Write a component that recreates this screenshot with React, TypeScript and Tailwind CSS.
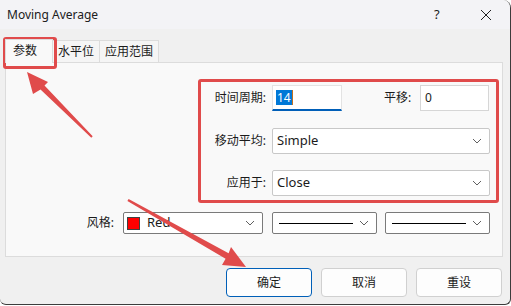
import React from "react";

const font = { fontFamily: '"Noto Sans", "Noto Sans CJK SC", sans-serif' };

function Chevron() {
  return (
    <svg width="10" height="6" viewBox="0 0 10 6" className="shrink-0">
      <path d="M1 1 L5 5 L9 1" fill="none" stroke="#606060" strokeWidth="1" />
    </svg>
  );
}

export default function App() {
  return (
    <div className="w-[511px] h-[306px] bg-white relative overflow-hidden" style={font}>
      <div className="w-[511px] h-[305px] bg-[#f0f0f0] border-r border-b border-[#3c3c3c] rounded-tr-[8px] rounded-b-[6px] flex flex-col text-[12px] text-[#1b1b1b] overflow-hidden">
        {/* title bar */}
        <div className="h-[29px] bg-[#f3f3f6] flex items-center pl-[7px] shrink-0">
          <span className="text-[12px] text-[#202020] leading-none">Moving Average</span>
          <span className="ml-auto w-[10px] text-[13px] leading-none mr-[36px]">?</span>
          <svg width="12" height="12" viewBox="0 0 12 12" className="mr-[18px]">
            <path d="M1 1 L11 11 M11 1 L1 11" stroke="#202020" strokeWidth="1" />
          </svg>
        </div>

        {/* tabs */}
        <div className="flex items-end pl-[5px] mt-[9px] h-[24px] shrink-0">
          <div className="w-[48px] h-[24px] bg-[#f9f9f9] border border-b-0 border-[#dcdcdc] flex items-start pt-[2px] pl-[7px] relative z-10 -mb-px">
            参数
          </div>
          <div className="w-[47px] h-[22px] bg-[#f5f5f5] border border-l-0 border-b-0 border-[#dcdcdc] flex items-center justify-center">
            水平位
          </div>
          <div className="w-[59px] h-[22px] bg-[#f5f5f5] border border-l-0 border-b-0 border-[#dcdcdc] flex items-center justify-center">
            应用范围
          </div>
        </div>

        {/* panel */}
        <div className="ml-[5px] w-[498px] h-[195px] bg-[#f9f9f9] border border-[#dcdcdc] shrink-0 flex flex-col pt-[22px]">
          {/* row 1 */}
          <div className="flex items-center h-[26px] pl-[200px]">
            <div className="w-[60px] text-right whitespace-nowrap">时间周期:</div>
            <div className="ml-[6px] w-[70px] h-[26px] bg-white border border-[#e3e3e3] border-b-2 border-b-[#005fb8] flex items-center pl-[3px]">
              <span className="bg-[#0078d7] text-white px-px leading-[15px]">14</span>
              <span className="w-px h-[15px] bg-[#c07020]" />
            </div>
            <div className="ml-[42px] w-[30px] whitespace-nowrap shrink-0">平移:</div>
            <div className="ml-[6px] w-[69px] h-[26px] bg-white border border-[#d6d6d6] flex items-center pl-[4px]">0</div>
          </div>
          {/* row 2 */}
          <div className="flex items-center h-[26px] pl-[200px] mt-[17px]">
            <div className="w-[60px] text-right whitespace-nowrap">移动平均:</div>
            <div className="ml-[6px] w-[218px] h-[26px] bg-white border border-[#c8c8c8] rounded-[2px] flex items-center pl-[4px] pr-[7px]">
              <span className="text-[13px]">Simple</span>
              <span className="ml-auto"><Chevron /></span>
            </div>
          </div>
          {/* row 3 */}
          <div className="flex items-center h-[26px] pl-[200px] mt-[16px]">
            <div className="w-[60px] text-right whitespace-nowrap">应用于:</div>
            <div className="ml-[6px] w-[218px] h-[26px] bg-white border border-[#c8c8c8] rounded-[2px] flex items-center pl-[4px] pr-[7px]">
              <span className="text-[13px]">Close</span>
              <span className="ml-auto"><Chevron /></span>
            </div>
          </div>
          {/* row 4 */}
          <div className="flex items-center h-[22px] mt-[16px]">
            <div className="w-[108px] text-right whitespace-nowrap">风格:</div>
            <div className="ml-[9px] w-[140px] h-[22px] bg-white border border-[#7a7a7a] rounded-[2px] flex items-center pl-[3px] pr-[7px]">
              <span className="w-[13px] h-[13px] bg-[#ff0000] border border-[#404040]" />
              <span className="ml-[7px] text-[13px]">Red</span>
              <span className="ml-auto"><Chevron /></span>
            </div>
            <div className="ml-[9px] w-[105px] h-[22px] bg-white border border-[#7a7a7a] rounded-[2px] flex items-center pl-[6px] pr-[7px]">
              <span className="w-[74px] h-px bg-black" />
              <span className="ml-auto"><Chevron /></span>
            </div>
            <div className="ml-[8px] w-[105px] h-[22px] bg-white border border-[#7a7a7a] rounded-[2px] flex items-center pl-[6px] pr-[7px]">
              <span className="w-[74px] h-px bg-black" />
              <span className="ml-auto"><Chevron /></span>
            </div>
          </div>
        </div>

        {/* buttons */}
        <div className="flex justify-end gap-[9px] pr-[8px] mt-[11px]">
          <button className="w-[86px] h-[29px] bg-[#fdfdfd] border border-[#005fb8] rounded-[4px] text-[12px]" style={font}>确定</button>
          <button className="w-[86px] h-[29px] bg-[#fdfdfd] border border-[#d0d0d0] rounded-[4px] text-[12px]" style={font}>取消</button>
          <button className="w-[86px] h-[29px] bg-[#fdfdfd] border border-[#d0d0d0] rounded-[4px] text-[12px]" style={font}>重设</button>
        </div>
      </div>

      {/* annotations */}
      <div className="absolute left-[3px] top-[37px] w-[54px] h-[32px] border-[3px] border-[#e04b4b] rounded-[3px] pointer-events-none" />
      <div className="absolute left-[198px] top-[79px] w-[301px] h-[124px] border-[3px] border-[#e04b4b] rounded-[3px] pointer-events-none" />
      <svg className="absolute left-0 top-0 pointer-events-none" width="511" height="306" viewBox="0 0 511 306">
        <polygon
          points="27,72 48,82 44.5,85.5 92.7,136.3 91.3,137.7 40.5,89.5 33,94"
          fill="#e04b4b"
        />
        <polygon
          points="246,267 231,247 228.6,253.2 128.6,199 127.4,201 225.6,258.8 222,265"
          fill="#e04b4b"
        />
      </svg>
    </div>
  );
}
